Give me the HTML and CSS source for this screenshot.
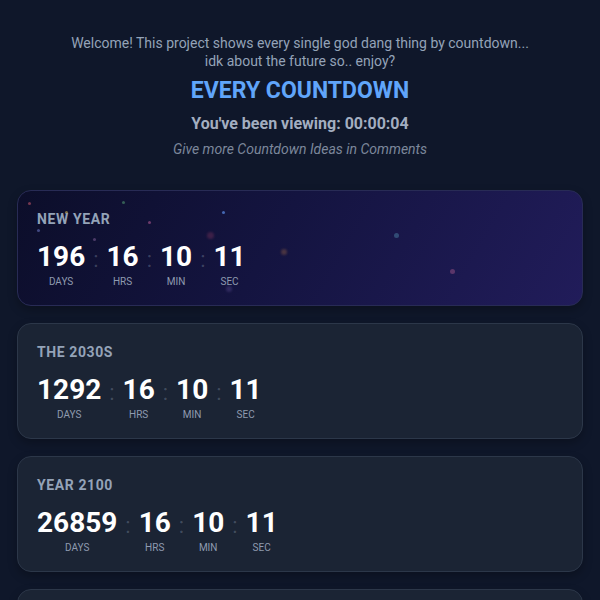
FILE: index.html
```html
<!DOCTYPE html>
<html lang="en">
<head>
<meta charset="utf-8">
<title>Every Countdown</title>
<link rel="stylesheet" href="styles.css">
</head>
<body>
<main class="page">
  <header class="intro">
    <p class="welcome">Welcome! This project shows every single god dang thing by countdown...<br>idk about the future so.. enjoy?</p>
    <h1 class="title">EVERY COUNTDOWN</h1>
    <p class="viewing">You've been viewing: 00:00:04</p>
    <p class="ideas">Give more Countdown Ideas in Comments</p>
  </header>

  <section class="list">
    <article class="card card-new">
      <div class="particles">
        <span class="dot d1"></span><span class="dot d2"></span><span class="dot d3"></span>
        <span class="dot d4"></span><span class="dot d5"></span><span class="dot d6"></span>
        <span class="dot d7"></span><span class="dot d8"></span><span class="dot d9"></span>
        <span class="dot d10"></span><span class="dot d11"></span><span class="dot d12"></span>
      </div>
      <h2 class="label">NEW YEAR</h2>
      <div class="timer">
        <div class="unit"><span class="num">196</span><span class="cap">DAYS</span></div>
        <span class="sep">:</span>
        <div class="unit"><span class="num">16</span><span class="cap">HRS</span></div>
        <span class="sep">:</span>
        <div class="unit"><span class="num">10</span><span class="cap">MIN</span></div>
        <span class="sep">:</span>
        <div class="unit"><span class="num">11</span><span class="cap">SEC</span></div>
      </div>
    </article>

    <article class="card">
      <h2 class="label">THE 2030S</h2>
      <div class="timer">
        <div class="unit"><span class="num">1292</span><span class="cap">DAYS</span></div>
        <span class="sep">:</span>
        <div class="unit"><span class="num">16</span><span class="cap">HRS</span></div>
        <span class="sep">:</span>
        <div class="unit"><span class="num">10</span><span class="cap">MIN</span></div>
        <span class="sep">:</span>
        <div class="unit"><span class="num">11</span><span class="cap">SEC</span></div>
      </div>
    </article>

    <article class="card">
      <h2 class="label">YEAR 2100</h2>
      <div class="timer">
        <div class="unit"><span class="num">26859</span><span class="cap">DAYS</span></div>
        <span class="sep">:</span>
        <div class="unit"><span class="num">16</span><span class="cap">HRS</span></div>
        <span class="sep">:</span>
        <div class="unit"><span class="num">10</span><span class="cap">MIN</span></div>
        <span class="sep">:</span>
        <div class="unit"><span class="num">11</span><span class="cap">SEC</span></div>
      </div>
    </article>

    <article class="card card-empty"></article>
  </section>
</main>
</body>
</html>
```

FILE: styles.css
```css
* { box-sizing: border-box; }

html, body {
  margin: 0;
  padding: 0;
  background: #0f172a;
}

body {
  font-family: Roboto, "Liberation Sans", Arial, sans-serif;
  color: #e2e8f0;
  height: 600px;
  overflow: hidden;
}

.page {
  padding: 34px 17px 0;
}

.intro {
  text-align: center;
}

.welcome {
  margin: 0;
  font-size: 14px;
  line-height: 18px;
  color: #94a3b8;
}

.title {
  margin: 8px 0 0;
  font-size: 23px;
  line-height: 26px;
  font-weight: 700;
  color: #60a5fa;
}

.viewing {
  margin: 10px 0 0;
  font-size: 16px;
  line-height: 20px;
  font-weight: 700;
  color: #a3aec0;
}

.ideas {
  margin: 6px 0 0;
  font-size: 14px;
  line-height: 18px;
  font-style: italic;
  color: #7c879b;
}

.list {
  margin-top: 32px;
  display: flex;
  flex-direction: column;
  gap: 17px;
}

.card {
  position: relative;
  overflow: hidden;
  flex: none;
  height: 116px;
  padding: 19px 19px 0;
  background: #1b2434;
  border: 1px solid #2c3749;
  border-radius: 14px;
  box-shadow: 0 4px 10px rgba(0, 0, 0, 0.25);
}

.card-new {
  background: linear-gradient(120deg, #0c0e2a 0%, #141440 45%, #211c5a 100%);
  border-color: #282b55;
}

.particles {
  position: absolute;
  inset: 0;
  pointer-events: none;
}

.dot {
  position: absolute;
  width: 3px;
  height: 3px;
  border-radius: 50%;
}

.d1 { left: 10px; top: 11px; background: rgba(200, 90, 110, 0.55); }
.d2 { left: 104px; top: 10px; background: rgba(90, 170, 120, 0.5); }
.d3 { left: 47px; top: 20px; background: rgba(210, 180, 80, 0.6); }
.d4 { left: 130px; top: 30px; background: rgba(200, 100, 160, 0.5); }
.d5 { left: 19px; top: 38px; background: rgba(110, 120, 200, 0.55); }
.d6 { left: 75px; top: 47px; background: rgba(150, 110, 170, 0.45); }
.d7 { left: 204px; top: 20px; background: rgba(90, 140, 230, 0.7); }
.d8 { left: 189px; top: 41px; width: 7px; height: 7px; background: rgba(190, 70, 110, 0.25); filter: blur(1px); }
.d9 { left: 263px; top: 58px; width: 6px; height: 6px; background: rgba(200, 130, 70, 0.3); filter: blur(1px); }
.d10 { left: 376px; top: 42px; width: 5px; height: 5px; background: rgba(80, 140, 170, 0.45); }
.d11 { left: 432px; top: 78px; width: 5px; height: 5px; background: rgba(170, 90, 140, 0.45); }
.d12 { left: 208px; top: 95px; width: 6px; height: 6px; background: rgba(130, 110, 190, 0.25); filter: blur(1px); }

.label {
  position: relative;
  margin: 0;
  font-size: 14px;
  line-height: 18px;
  font-weight: 700;
  letter-spacing: 0.6px;
  color: #94a3b8;
}

.timer {
  position: relative;
  margin-top: 13px;
  display: flex;
  align-items: flex-start;
  gap: 8px;
}

.unit {
  display: flex;
  flex-direction: column;
  align-items: center;
}

.num {
  font-size: 28px;
  line-height: 32px;
  font-weight: 700;
  color: #ffffff;
}

.cap {
  margin-top: 3px;
  font-size: 10px;
  line-height: 12px;
  color: #8f9bb0;
}

.sep {
  font-size: 22px;
  line-height: 32px;
  margin-top: 3px;
  color: rgba(148, 163, 184, 0.32);
}
```
